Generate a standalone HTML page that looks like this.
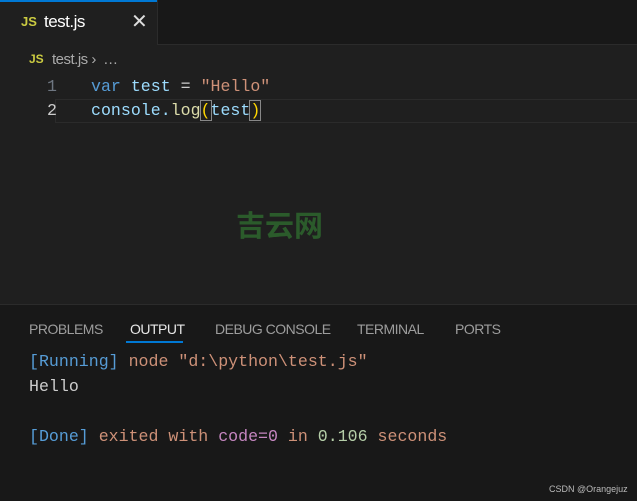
<!DOCTYPE html><html><head><style>
body{margin:0;width:637px;height:500px;background:#1f1f1f;position:relative;overflow:hidden;font-family:"Liberation Sans",sans-serif}
.a{position:absolute;white-space:pre}
.m{font-family:"Liberation Mono",monospace;font-size:16.6px}
.t{color:#9d9d9d;font-size:14px;letter-spacing:-0.5px}
</style></head><body>
<div class="a" style="left:0;top:0;width:637px;height:44px;background:#181818;border-bottom:1px solid #2b2b2b"></div>
<div class="a" style="left:0;top:0;width:157px;height:45px;background:#1f1f1f;border-right:1px solid #2b2b2b"></div>
<div class="a" style="left:0;top:0;width:157px;height:2px;background:#0078d4"></div>
<div class="a" style="left:21px;top:14px;color:#cbcb41;font-weight:bold;font-size:13px">JS</div>
<div class="a" style="left:44px;top:12px;color:#fff;font-size:17px;letter-spacing:-0.5px">test.js</div>
<div class="a" style="left:131px;top:9px;color:#ddd;font-size:20px">✕</div>
<div class="a" style="left:29px;top:52px;color:#cbcb41;font-weight:bold;font-size:12px">JS</div>
<div class="a" style="left:52px;top:51px;color:#aaa;font-size:15px;letter-spacing:-0.5px">test.js ›  …</div>
<div class="a" style="left:55px;top:99px;width:582px;height:22px;border:1px solid #2b2b2b;border-right:0"></div>
<div class="a m" style="left:47px;top:77px;color:#6e7681">1</div>
<div class="a m" style="left:47px;top:101px;color:#ccc">2</div>
<div class="a m" style="left:91px;top:77px;color:#ccc"><span style="color:#569cd6">var</span> <span style="color:#9cdcfe">test</span> = <span style="color:#ce9178">"Hello"</span></div>
<div class="a m" style="left:91px;top:101px;color:#9cdcfe">console.<span style="color:#dcdcaa">log</span><span style="color:#ffd700;outline:1px solid #888">(</span>test<span style="color:#ffd700;outline:1px solid #888">)</span></div>
<div class="a" style="left:236px;top:203px;color:#2f6a2f;font-size:29px;font-weight:bold;font-family:'Noto Sans CJK SC',sans-serif;opacity:.8">吉云网</div>
<div class="a" style="left:0;top:304px;width:637px;height:196px;background:#181818;border-top:1px solid #2b2b2b"></div>
<div class="a t" style="left:29px;top:321px">PROBLEMS</div>
<div class="a t" style="left:130px;top:321px;color:#e7e7e7">OUTPUT</div>
<div class="a" style="left:126px;top:341px;width:57px;height:2px;background:#0078d4"></div>
<div class="a t" style="left:215px;top:321px">DEBUG CONSOLE</div>
<div class="a t" style="left:357px;top:321px">TERMINAL</div>
<div class="a t" style="left:455px;top:321px">PORTS</div>
<div class="a m" style="left:29px;top:352px;color:#ce9178"><span style="color:#569cd6">[Running]</span> node "d:\python\test.js"</div>
<div class="a m" style="left:29px;top:377px;color:#ccc">Hello</div>
<div class="a m" style="left:29px;top:427px;color:#ce9178"><span style="color:#569cd6">[Done]</span> exited with <span style="color:#c586c0">code=0</span> in <span style="color:#b5cea8">0.106</span> seconds</div>
<div class="a" style="left:549px;top:484px;color:#bbb;font-size:9px">CSDN @Orangejuz</div>
</body></html>
